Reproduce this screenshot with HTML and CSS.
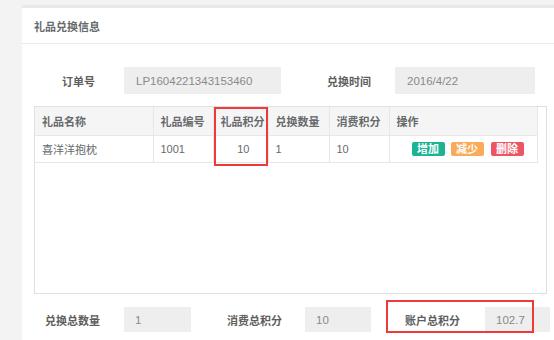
FILE: index.html
```html
<!DOCTYPE html>
<html lang="zh-CN">
<head>
    <meta charset="UTF-8">
    <title>礼品兑换信息</title>
    <link rel="stylesheet" href="styles.css">
</head>
<body>

    <div class="page">
        <div class="ibox">
            <!-- Title -->
            <div class="ibox-title">礼品兑换信息</div>

            <div class="ibox-content">
                <!-- Order info -->
                <div class="form-row top-row">
                    <label class="lbl lbl-order">订单号</label>
                    <div class="field field-order">LP1604221343153460</div>
                    <label class="lbl lbl-time">兑换时间</label>
                    <div class="field field-time">2016/4/22</div>
                </div>

                <!-- Gift table -->
                <div class="table-box">
                    <table class="gift-table">
                        <thead>
                            <tr>
                                <th class="c-name">礼品名称</th>
                                <th class="c-no">礼品编号</th>
                                <th class="c-point">礼品积分</th>
                                <th class="c-qty">兑换数量</th>
                                <th class="c-cost">消费积分</th>
                                <th class="c-op">操作</th>
                            </tr>
                        </thead>
                        <tbody>
                            <tr>
                                <td>喜洋洋抱枕</td>
                                <td>1001</td>
                                <td class="num-right">10</td>
                                <td>1</td>
                                <td>10</td>
                                <td class="ops">
                                    <span class="btn btn-add">增加</span>
                                    <span class="btn btn-sub">减少</span>
                                    <span class="btn btn-del">删除</span>
                                </td>
                            </tr>
                        </tbody>
                    </table>
                </div>

                <!-- Totals -->
                <div class="form-row bottom-row">
                    <label class="lbl lbl-total">兑换总数量</label>
                    <div class="field field-total">1</div>
                    <label class="lbl lbl-cost">消费总积分</label>
                    <div class="field field-cost">10</div>
                    <label class="lbl lbl-account">账户总积分</label>
                    <div class="field field-account">102.7</div>
                </div>
            </div>

            <!-- Red highlight marks -->
            <div class="mark mark-column"></div>
            <div class="mark mark-account"></div>
        </div>
    </div>

</body>
</html>
```

FILE: styles.css
```css
* {
    margin: 0;
    padding: 0;
    box-sizing: border-box;
}

body {
    font-family: "Liberation Sans", "Noto Sans CJK SC", sans-serif;
    font-size: 11px;
    color: #676a6c;
    background-color: #f3f3f3;
    overflow: hidden;
}

.page {
    padding: 5px 0 0 22px;
}

.ibox {
    position: relative;
    height: 335px;
    background-color: #fff;
    border-top: 3px solid #e7eaec;
}

/* Title bar */
.ibox-title {
    height: 36px;
    padding-left: 12px;
    display: flex;
    align-items: center;
    font-weight: bold;
    color: #676a6c;
    border-bottom: 1px solid #e7eaec;
}

.ibox-content {
    padding-top: 23px;
}

/* Form rows */
.form-row {
    display: flex;
    align-items: center;
}

.lbl {
    text-align: right;
    font-weight: bold;
    color: #5e5e5e;
}

.field {
    background-color: #eeeeee;
    color: #8a8a8a;
    font-size: 11.5px;
    padding-left: 12px;
    display: flex;
    align-items: center;
}

.top-row .field {
    height: 27px;
}

.lbl-order { width: 73px; margin-right: 29px; }
.field-order { width: 157px; }
.lbl-time { width: 90px; margin-right: 24px; }
.field-time { width: 140px; }

.bottom-row {
    margin-top: 13px;
}

.bottom-row .field {
    height: 25px;
    padding-left: 11px;
}

.lbl-total { width: 78px; margin-right: 24px; }
.field-total { width: 67px; }
.lbl-cost { width: 91px; margin-right: 23px; }
.field-cost { width: 66px; }
.lbl-account { width: 89px; margin-right: 25px; }
.field-account { width: 65px; }

/* Table */
.table-box {
    margin: 12px 0 0 12px;
    width: 513px;
    height: 188px;
    border: 1px solid #e0e0e0;
}

.gift-table {
    width: 502px;
    border-collapse: collapse;
    table-layout: fixed;
}

.gift-table th,
.gift-table td {
    text-align: left;
    padding: 0 0 0 7px;
    border-right: 1px solid #e7e7e7;
    border-bottom: 1px solid #e7e7e7;
    white-space: nowrap;
}

.gift-table th {
    height: 28px;
    background-color: #f5f5f5;
    font-weight: bold;
    color: #676a6c;
}

.gift-table td {
    height: 27px;
    color: #676a6c;
}

.c-name { width: 118px; }
.c-no { width: 60px; }
.c-point { width: 55px; }
.c-qty { width: 61px; }
.c-cost { width: 60px; }
.c-op { width: 148px; }

.gift-table td.num-right {
    text-align: right;
    padding: 0 18px 0 0;
}

.gift-table td.ops {
    padding-left: 22px;
    font-size: 0;
}

.btn {
    display: inline-block;
    width: 33px;
    height: 14px;
    line-height: 14px;
    margin-right: 6px;
    border-radius: 2px;
    text-align: center;
    font-size: 11px;
    font-weight: bold;
    color: #fff;
}

.btn-add { background-color: #1ab394; }
.btn-sub { background-color: #f8ac59; margin-right: 7px; }
.btn-del { background-color: #ed5565; }

/* Red highlight marks over content */
.mark {
    position: absolute;
    border: 2px solid #f03a3a;
}

.mark-column {
    left: 192px;
    top: 99px;
    width: 54px;
    height: 59px;
}

.mark-account {
    left: 364px;
    top: 292px;
    width: 148px;
    height: 33px;
}
```
